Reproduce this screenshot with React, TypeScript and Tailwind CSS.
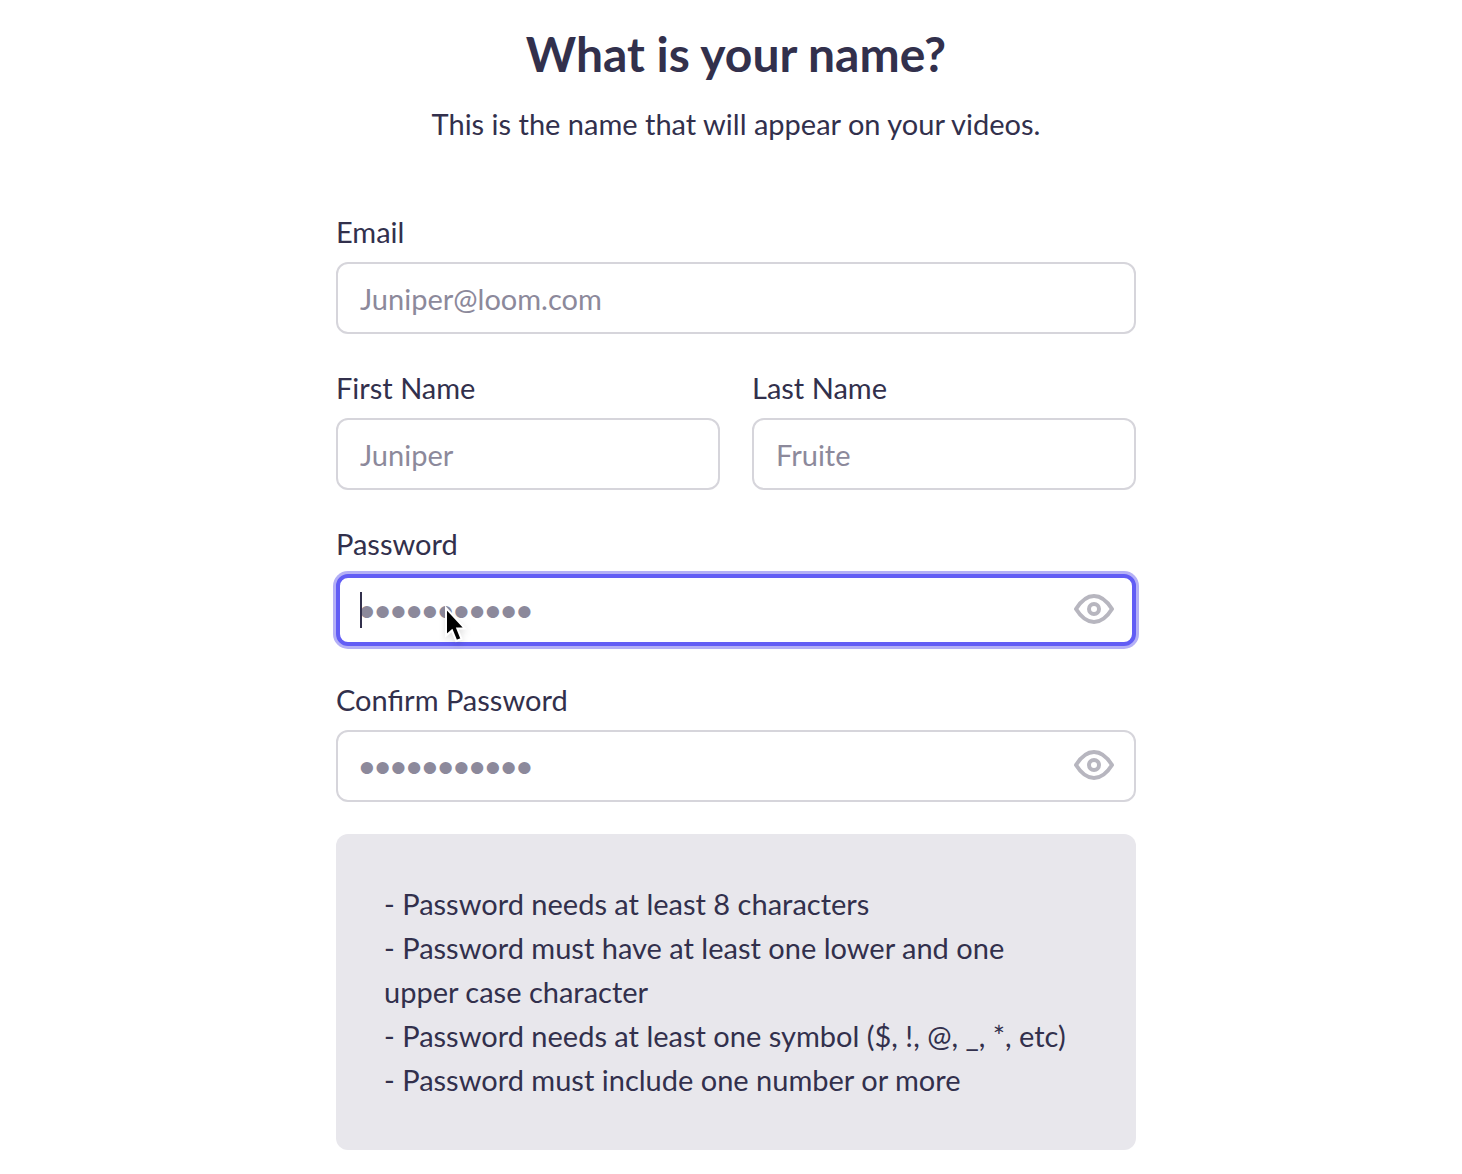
import { useState } from "react";

const DOTS = "•".repeat(11);

function EyeIcon() {
  return (
    <svg viewBox="0 0 40 30" className="h-[30px] w-10" fill="none" stroke="#b7b6bf" strokeWidth="4" strokeLinejoin="round" aria-hidden="true">
      <path d="M2 15C7 7 13 2 20 2s13 5 18 13C33 23 27 28 20 28S7 23 2 15Z" />
      <circle cx="20" cy="15" r="5" />
    </svg>
  );
}

function PointerIcon() {
  return (
    <svg viewBox="0 0 24 38" className="absolute top-8 left-[107px] h-[38px] w-6 drop-shadow-md" aria-hidden="true">
      <path d="M3 2V29.500L9 24.500L13.300 35L18.500 33L14.300 22.500H22Z" fill="#000" stroke="#fff" strokeWidth="2" />
    </svg>
  );
}

const base =
  "h-[72px] w-full rounded-xl bg-white text-[#32304c] outline-none placeholder:text-[#8c899b] placeholder:opacity-100";

function TextField({ id, label, type = "text", placeholder }: { id: string; label: string; type?: string; placeholder: string }) {
  return (
    <div className="flex min-w-0 flex-1 flex-col gap-2">
      <label htmlFor={id}>{label}</label>
      <input id={id} type={type} placeholder={placeholder} className={`${base} border-2 border-[#d6d5db] pr-5 pl-[22px]`} />
    </div>
  );
}

function PasswordField({ id, label, active = false }: { id: string; label: string; active?: boolean }) {
  const [shown, setShown] = useState(false);
  return (
    <div className="flex flex-col gap-2">
      <label htmlFor={id}>{label}</label>
      <div className="relative">
        <input
          id={id}
          type={shown ? "text" : "password"}
          placeholder={DOTS}
          className={`${base} pt-1 pr-20 font-['Liberation_Sans',sans-serif] text-[45px] ${
            active ? "border-4 border-[#625df5] pl-[19px] ring-3 ring-[#b4b0f6]" : "border-2 border-[#d6d5db] pl-[21px]"
          }`}
        />
        <button
          type="button"
          aria-label={`Show ${label.toLowerCase()}`}
          onClick={() => setShown(!shown)}
          className="absolute top-5 right-[22px]"
        >
          <EyeIcon />
        </button>
        {active && <span className="absolute top-[18px] left-6 h-9 w-0.5 bg-[#32304c]" />}
        {active && <PointerIcon />}
      </div>
    </div>
  );
}

const RULES = [
  "- Password needs at least 8 characters",
  "- Password must have at least one lower and one upper case character",
  "- Password needs at least one symbol ($, !, @, _, *, etc)",
  "- Password must include one number or more",
];

export default function App() {
  return (
    <main className="flex min-h-screen flex-col items-center bg-white pt-6 pb-6 pl-[10px] font-['Lato',sans-serif] text-[29px] leading-[44px] text-[#32304c]">
      <h1 className="text-[48px] leading-[60px] font-bold">What is your name?</h1>
      <p className="mt-[18px]">This is the name that will appear on your videos.</p>
      <form className="mt-16 flex w-full max-w-[800px] flex-col gap-8">
        <TextField id="email" label="Email" type="email" placeholder="Juniper@loom.com" />
        <div className="flex gap-8">
          <TextField id="first" label="First Name" placeholder="Juniper" />
          <TextField id="last" label="Last Name" placeholder="Fruite" />
        </div>
        <PasswordField id="password" label="Password" active />
        <PasswordField id="confirm" label="Confirm Password" />
        <ul className="rounded-xl bg-[#e8e7ec] py-12 pr-14 pl-12">
          {RULES.map((rule) => (
            <li key={rule}>{rule}</li>
          ))}
        </ul>
      </form>
    </main>
  );
}
